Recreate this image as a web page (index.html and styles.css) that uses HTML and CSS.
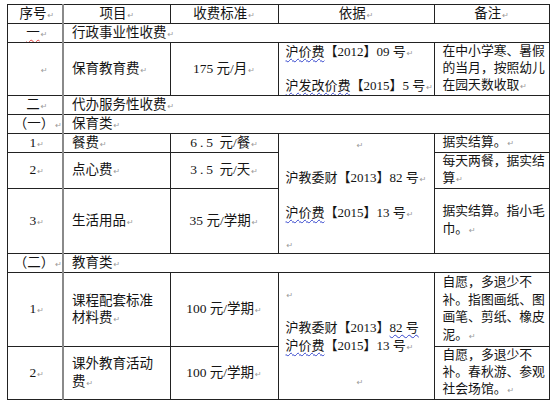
FILE: index.html
```html
<!DOCTYPE html>
<html lang="zh">
<head>
<meta charset="utf-8">
<link rel="stylesheet" href="styles.css">
</head>
<body>
<table class="fee">
  <colgroup><col class="c1"><col class="c2"><col class="c3"><col class="c4"><col class="c5"></colgroup>
  <tr class="r19">
    <td class="no">序号<span class="pm">↵</span></td>
    <td class="ctr">项目<span class="pm">↵</span></td>
    <td class="ctr">收费标准<span class="pm">↵</span></td>
    <td class="ctr">依据<span class="pm">↵</span></td>
    <td class="ctr">备注<span class="pm">↵</span></td>
  </tr>
  <tr class="r19">
    <td class="no"><span class="sr">一</span><span class="pm">↵</span></td>
    <td class="lft" colspan="4">行政事业性收费<span class="pm">↵</span></td>
  </tr>
  <tr class="r53">
    <td class="no mk"><span class="pm">↵</span></td>
    <td class="lft">保育教育费<span class="pm">↵</span></td>
    <td class="ctr">175 元/月<span class="pm">↵</span></td>
    <td class="basis">
      <div class="ln l17"><span class="sp">沪价费</span>【2012】09 号<span class="pm">↵</span></div>
      <div class="ln l17"></div>
      <div class="ln l17"><span class="sp">沪发改价费</span>【2015】5 号<span class="pm">↵</span></div>
    </td>
    <td class="note l17">在中小学寒、暑假<br>的当月，按照幼儿<br>在园天数收取<span class="pm">↵</span></td>
  </tr>
  <tr class="r19">
    <td class="no">二<span class="pm">↵</span></td>
    <td class="lft" colspan="4">代办服务性收费<span class="pm">↵</span></td>
  </tr>
  <tr class="r19">
    <td class="no paren">（一）<span class="pm">↵</span></td>
    <td class="lft" colspan="4">保育类<span class="pm">↵</span></td>
  </tr>
  <tr class="r19">
    <td class="no">1<span class="pm">↵</span></td>
    <td class="lft">餐费<span class="pm">↵</span></td>
    <td class="ctr"><span class="wide">6.5</span> 元/餐<span class="pm">↵</span></td>
    <td class="basis top" rowspan="3">
      <div class="ln cen g1"><span class="pm">↵</span></div>
      <div class="ln g2">沪教委财【2013】82 号<span class="pm">↵</span></div>
      <div class="ln g3"><span class="sp">沪价费</span>【2015】13 号<span class="pm">↵</span></div>
      <div class="ln g4"><span class="pm">↵</span></div>
    </td>
    <td class="note">据实结算。<span class="pm">↵</span></td>
  </tr>
  <tr class="r36">
    <td class="no">2<span class="pm">↵</span></td>
    <td class="lft">点心费<span class="pm">↵</span></td>
    <td class="ctr"><span class="wide">3.5</span> 元/天<span class="pm">↵</span></td>
    <td class="note">每天两餐，据实结<br>算<span class="pm">↵</span></td>
  </tr>
  <tr class="r65">
    <td class="no">3<span class="pm">↵</span></td>
    <td class="lft">生活用品<span class="pm">↵</span></td>
    <td class="ctr">35 元/学期<span class="pm">↵</span></td>
    <td class="note">据实结算。指小毛<br>巾。<span class="pm">↵</span></td>
  </tr>
  <tr class="r19">
    <td class="no paren">（二）<span class="pm">↵</span></td>
    <td class="lft" colspan="4">教育类<span class="pm">↵</span></td>
  </tr>
  <tr class="r74">
    <td class="no">1<span class="pm">↵</span></td>
    <td class="lft">课程配套标准<br>材料费<span class="pm">↵</span></td>
    <td class="ctr">100 元/学期<span class="pm">↵</span></td>
    <td class="basis top" rowspan="2">
      <div class="ln h1"><span class="pm">↵</span></div>
      <div class="ln h2">沪教委财【2013】<span class="sp">82 号</span></div>
      <div class="ln h3"><span class="sp">沪价费</span>【2015】13 号<span class="pm">↵</span></div>
      <div class="ln cen h4"><span class="pm">↵</span></div>
    </td>
    <td class="note">自愿，多退少不<br>补。指图画纸、图<br>画笔、剪纸、橡皮<br>泥。<span class="pm">↵</span></td>
  </tr>
  <tr class="r53">
    <td class="no">2<span class="pm">↵</span></td>
    <td class="lft">课外教育活动<br>费<span class="pm">↵</span></td>
    <td class="ctr">100 元/学期<span class="pm">↵</span></td>
    <td class="note l17">自愿，多退少不<br>补。春秋游、参观<br>社会场馆。<span class="pm">↵</span></td>
  </tr>
</table>
</body>
</html>
```

FILE: styles.css
```css
html, body {
  margin: 0;
  padding: 0;
  background: #ffffff;
}

body {
  padding: 3.5px 0 0 6.5px;
  font-family: "Liberation Serif", "Noto Sans CJK SC", serif;
  font-size: 13.5px;
  color: #141414;
}

.fee {
  border-collapse: collapse;
  table-layout: fixed;
  width: 543px;
}

.c1 { width: 56px; }
.c2 { width: 107px; }
.c3 { width: 108px; }
.c4 { width: 156px; }
.c5 { width: 115px; }

.fee td {
  border: 1px solid #222;
  padding: 0;
  vertical-align: middle;
  white-space: nowrap;
  line-height: 17.5px;
  overflow: hidden;
}

.fee td:nth-child(2) {
  border-left: 2px solid #8a8a8a;
}

.r19 { height: 19px; }
.r36 { height: 36px; }
.r53 { height: 53px; }
.r65 { height: 65px; }
.r74 { height: 74px; }

.no {
  text-align: center;
  padding-left: 4px !important;
}

.no.paren {
  padding-left: 6px !important;
}

.no.mk {
  padding-left: 18px !important;
}

.ctr {
  text-align: center;
}

.lft {
  text-align: left;
  padding-left: 8px !important;
}

.basis {
  padding-left: 7px !important;
  text-align: left;
  font-size: 13px;
}

.basis.top {
  vertical-align: top;
}

.note {
  padding-left: 8px !important;
  font-size: 12.8px;
}

.ln {
  height: 17.5px;
}

.fee .l17 {
  line-height: 17px;
}

.ln.l17 {
  height: 17px;
}

.cen {
  text-align: center;
}

.g1 { margin-top: 1px; }
.g2 { margin-top: 16.5px; }
.g3 { margin-top: 17.5px; }
.g4 { margin-top: 13.5px; }

.h1 { margin-top: 12px; }
.h2 { margin-top: 16.5px; }
.h3 { margin-top: 0.5px; }
.h4 { margin-top: 17.5px; }

.pm {
  font-family: "DejaVu Sans", sans-serif;
  font-size: 8px;
  line-height: 0;
  color: #9a9a9a;
  margin-left: 1px;
}

.sp {
  text-decoration: underline wavy #3344cc;
  text-decoration-thickness: 1px;
  text-underline-offset: 2px;
}

.sr {
  text-decoration: underline wavy #e03a3a;
  text-decoration-thickness: 1px;
  text-underline-offset: 2px;
}

.wide {
  letter-spacing: 3px;
}
```
